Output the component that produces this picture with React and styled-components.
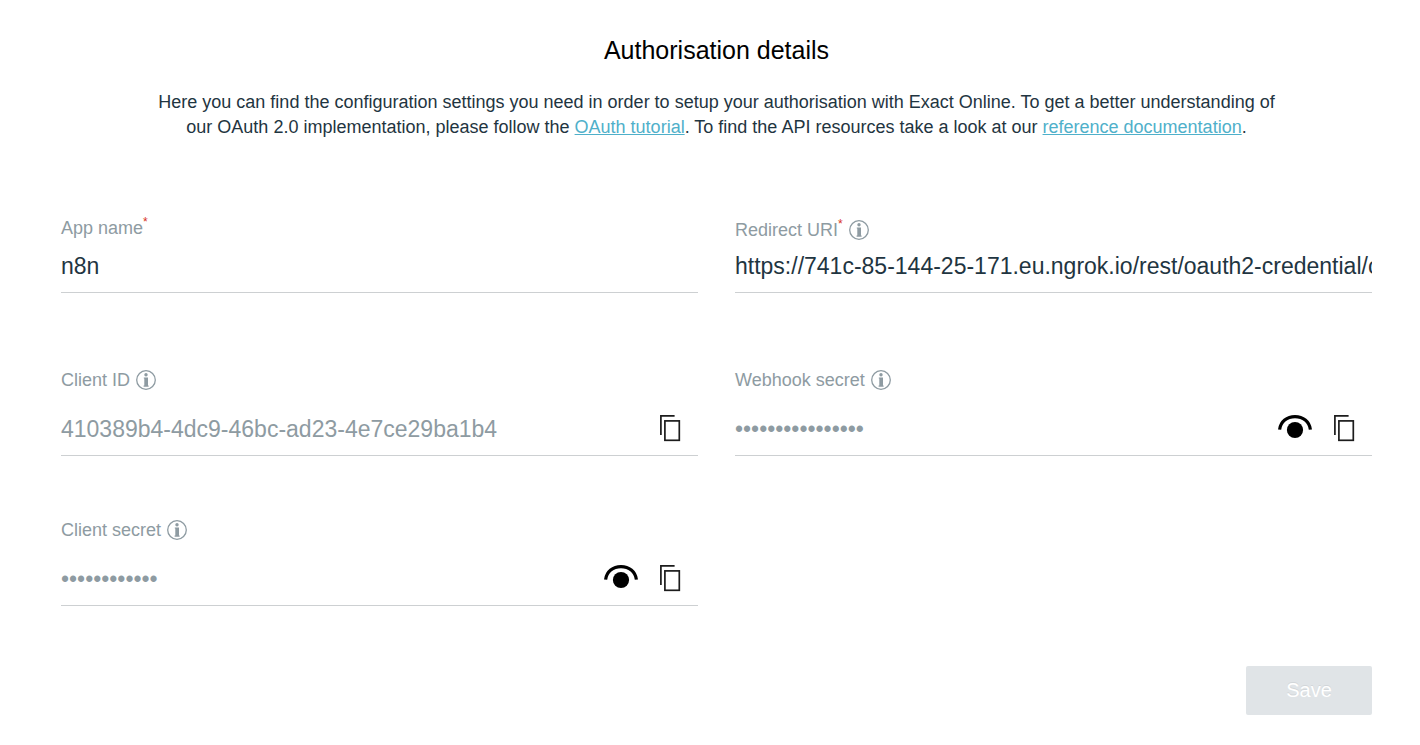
import React, { useState } from "react";
import styled, { createGlobalStyle } from "styled-components";

const GlobalStyle = createGlobalStyle`
  *, *::before, *::after { box-sizing: border-box; }
  body {
    margin: 0;
    background: #fff;
    color: #1f3541;
    font-family: Arial, "Liberation Sans", sans-serif;
    font-size: 18px;
    line-height: 25px;
  }
`;

const Page = styled.main`
  padding: 35px 48px 32px 61px;
`;

const Intro = styled.header`
  max-width: 1120px;
  margin: 0 auto;
  text-align: center;
`;

const Title = styled.h1`
  margin: 0 0 25px;
  color: #000;
  font-size: 25px;
  font-weight: 400;
  line-height: 30px;
`;

const Description = styled.p`
  margin: 0;
`;

const Link = styled.a`
  color: #4fb0ca;
  text-decoration: underline;
`;

const Form = styled.form`
  display: flex;
  flex-direction: column;
`;

const Fields = styled.div`
  display: grid;
  grid-template-columns: 1fr 1fr;
  column-gap: 37px;
  margin-top: 76px;
`;

const Field = styled.div`
  display: flex;
  flex-direction: column;
  min-width: 0;
  justify-content: flex-end;
  margin-bottom: ${(p) => (p.$spacious ? 73 : 60)}px;
`;

const LabelRow = styled.div`
  display: flex;
  align-items: ${(p) => (p.$info ? "center" : "flex-start")};
  gap: 6px;
  height: 28px;
  color: #8e9ba2;
`;

const Label = styled.label`
  white-space: nowrap;
`;

const Required = styled.sup`
  color: #d8321c;
  font-size: 12px;
  line-height: 0;
  vertical-align: 8px;
`;

const InfoButton = styled.button`
  display: flex;
  padding: 0;
  border: 0;
  background: none;
  color: inherit;
  cursor: help;
`;

const Control = styled.div`
  display: flex;
  align-items: center;
  height: ${(p) => (p.$tall ? 62 : 49)}px;
  padding: ${(p) => (p.$tall ? "9px 16px 0 0" : "0 0 3px")};
  border-bottom: 1px solid #cdd0d2;
`;

const Input = styled.input`
  flex: 1;
  min-width: 0;
  height: 40px;
  padding: 0;
  border: 0;
  outline: 0;
  background: none;
  color: ${(p) => (p.readOnly ? "#8e9ba2" : "#1f3541")};
  font: inherit;
  font-size: 23px;
`;

const Actions = styled.div`
  display: flex;
  align-items: center;
  gap: 22px;
`;

const IconButton = styled.button`
  display: flex;
  padding: 0;
  border: 0;
  background: none;
  color: #000;
  cursor: pointer;
`;

const SaveButton = styled.button`
  align-self: flex-end;
  width: 126px;
  height: 49px;
  border: 0;
  border-radius: 2px;
  background: #e0e4e7;
  color: #fff;
  font: inherit;
  font-size: 20px;
  text-shadow: 0 -1px 0 #d2d6d9;
`;

const InfoIcon = () => (
  <svg width="20" height="20" viewBox="0 0 20 20" fill="none" aria-hidden="true">
    <circle cx="10" cy="10" r="9.3" stroke="currentColor" strokeWidth="1.3" />
    <circle cx="10" cy="4.8" r="1.7" fill="currentColor" />
    <path d="M7.8 7.4H12v8.2h.6v1.2H7.600v-1.200h.7V8.500h-.5z" fill="currentColor" />
  </svg>
);

const EyeIcon = () => (
  <svg width="34" height="28" viewBox="0 0 34 28" fill="none" aria-hidden="true">
    <path d="M1.600 14.600C2.600 6.600 9 1.600 17 1.600S31.400 6.600 32.400 14.600" stroke="currentColor" strokeWidth="3.200" />
    <circle cx="17" cy="15" r="8.100" fill="currentColor" />
  </svg>
);

const CopyIcon = () => (
  <svg width="22" height="28" viewBox="0 0 22 28" fill="none" aria-hidden="true">
    <path d="M14.600 0.900H0.900V20" stroke="#1c1c1c" strokeWidth="1.700" />
    <rect x="4.900" y="5.900" width="14.400" height="19.400" stroke="#1c1c1c" strokeWidth="1.700" />
  </svg>
);

function TextField({ id, label, value, required, info, secret, copyable, spacious }) {
  const [visible, setVisible] = useState(false);
  const [text, setText] = useState(value);
  return (
    <Field $spacious={spacious}>
      <LabelRow $info={info}>
        <Label htmlFor={id}>
          {label}
          {required && <Required>*</Required>}
        </Label>
        {info && (
          <InfoButton type="button" aria-label={`About ${label}`}>
            <InfoIcon />
          </InfoButton>
        )}
      </LabelRow>
      <Control $tall={copyable}>
        <Input
          id={id}
          type={secret && !visible ? "password" : "text"}
          value={text}
          required={required}
          readOnly={copyable}
          autoComplete="off"
          onChange={(e) => setText(e.target.value)}
        />
        {copyable && (
          <Actions>
            {secret && (
              <IconButton type="button" aria-label={`Show ${label}`} onClick={() => setVisible(!visible)}>
                <EyeIcon />
              </IconButton>
            )}
            <IconButton
              type="button"
              aria-label={`Copy ${label}`}
              onClick={() => navigator.clipboard?.writeText(text)}
            >
              <CopyIcon />
            </IconButton>
          </Actions>
        )}
      </Control>
    </Field>
  );
}

export default function App() {
  return (
    <>
      <GlobalStyle />
      <Page>
        <Intro>
          <Title>Authorisation details</Title>
          <Description>
            Here you can find the configuration settings you need in order to setup your authorisation with Exact
            Online. To get a better understanding of our OAuth 2.0 implementation, please follow the{" "}
            <Link href="#oauth-tutorial">OAuth tutorial</Link>. To find the API resources take a look at our{" "}
            <Link href="#reference">reference documentation</Link>.
          </Description>
        </Intro>
        <Form onSubmit={(e) => e.preventDefault()}>
          <Fields>
            <TextField id="app-name" label="App name" value="n8n" required spacious />
            <TextField
              id="redirect-uri"
              label="Redirect URI"
              value="https://741c-85-144-25-171.eu.ngrok.io/rest/oauth2-credential/callback"
              required
              info
              spacious
            />
            <TextField id="client-id" label="Client ID" value="410389b4-4dc9-46bc-ad23-4e7ce29ba1b4" info copyable />
            <TextField id="webhook-secret" label="Webhook secret" value="0000000000000000" info secret copyable />
            <TextField id="client-secret" label="Client secret" value="000000000000" info secret copyable />
          </Fields>
          <SaveButton type="submit" disabled>
            Save
          </SaveButton>
        </Form>
      </Page>
    </>
  );
}
